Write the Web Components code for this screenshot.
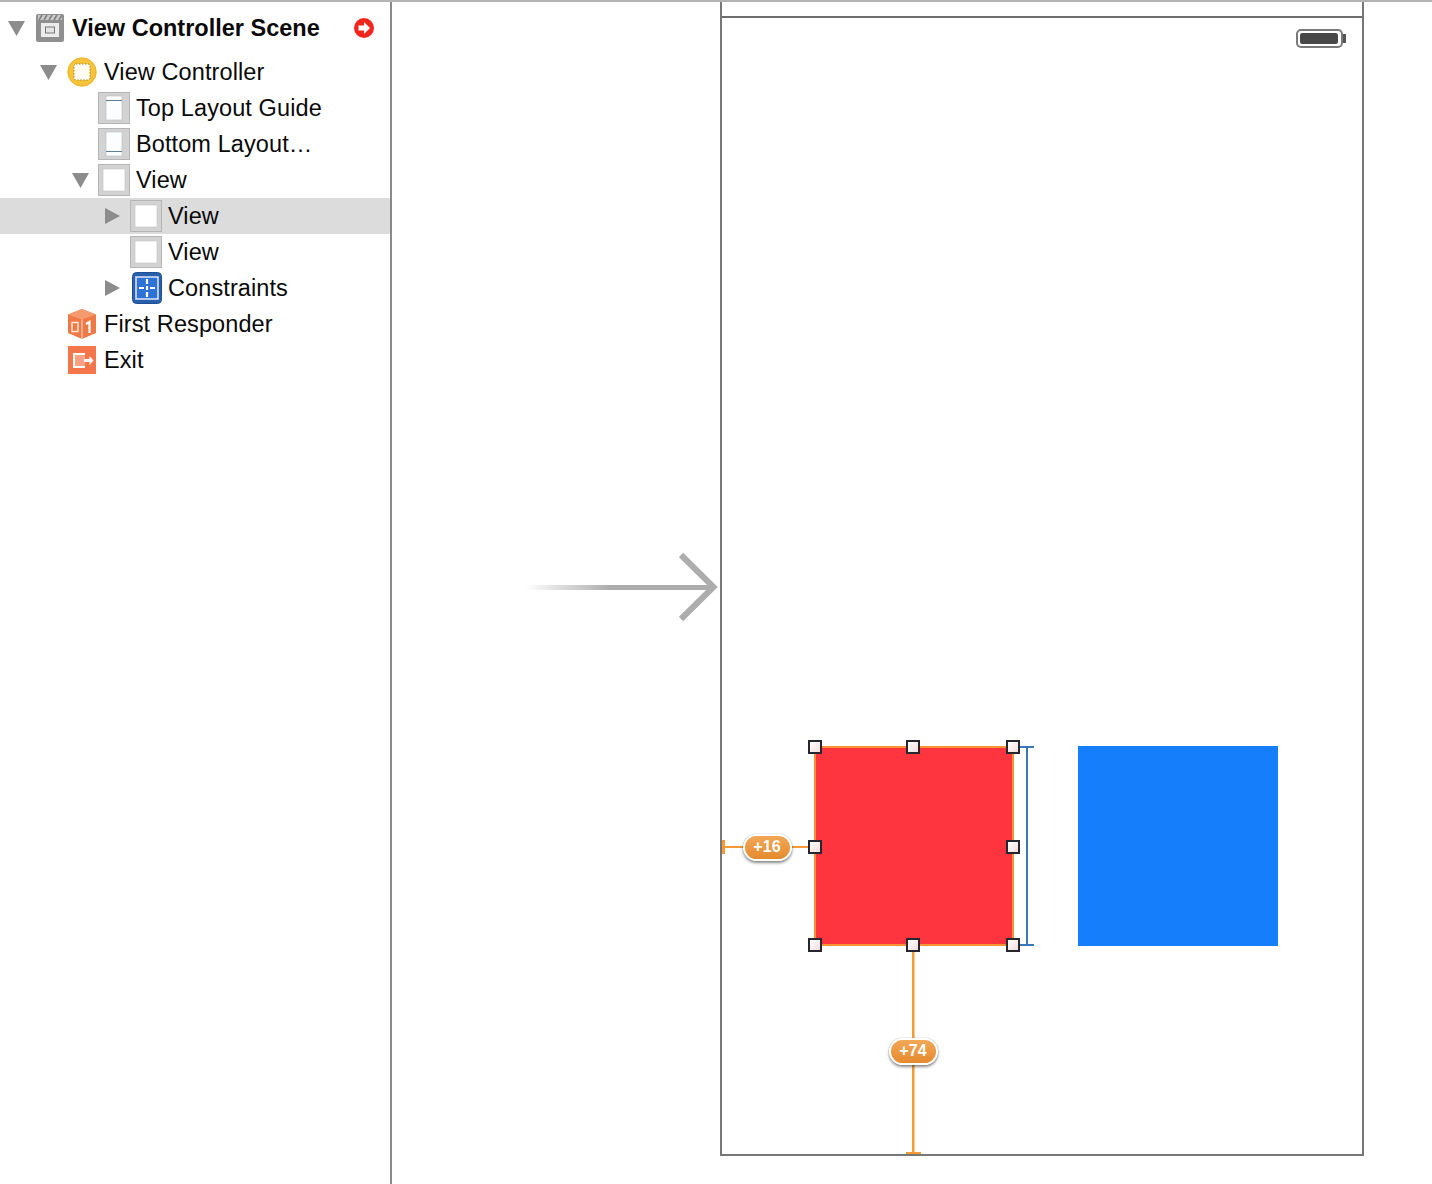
<!DOCTYPE html>
<html lang="en"><head><meta charset="utf-8"><title>Storyboard</title>
<style>html,body{margin:0;padding:0;background:#fff}body{width:1432px;height:1184px;overflow:hidden;font-family:"Liberation Sans",Arial,sans-serif}</style>
</head><body>
<ib-editor>
  <ib-outline slot="outline">
    <ib-row level="0" open icon="scene" bold badge>View Controller Scene</ib-row>
    <ib-row level="1" open icon="vc" top="8">View Controller</ib-row>
    <ib-row level="2" icon="topguide">Top Layout Guide</ib-row>
    <ib-row level="2" icon="bottomguide">Bottom Layout…</ib-row>
    <ib-row level="2" open icon="view">View</ib-row>
    <ib-row level="3" closed icon="view" selected>View</ib-row>
    <ib-row level="3" icon="view">View</ib-row>
    <ib-row level="3" closed icon="constraints">Constraints</ib-row>
    <ib-row level="1" icon="responder">First Responder</ib-row>
    <ib-row level="1" icon="exit">Exit</ib-row>
  </ib-outline>
  <ib-canvas slot="canvas"></ib-canvas>
</ib-editor>
<script>
function tpl(css, html){const t=document.createElement('template');t.innerHTML='<style>'+css+'</style>'+html;return t;}
function define(name,t){customElements.define(name,class extends HTMLElement{constructor(){super();this.attachShadow({mode:'open'}).appendChild(t.content.cloneNode(true));}});}

define('ib-editor',tpl(`:host{display:flex;width:1432px;height:1184px;box-sizing:border-box;border-top:2px solid #b3b3b3}
 ::slotted([slot=outline]){flex:0 0 390px}
 ::slotted([slot=canvas]){flex:1}`,`<slot name="outline"></slot><slot name="canvas"></slot>`));

define('ib-outline',tpl(`:host{display:flex;flex-direction:column;padding-top:8px;border-right:2px solid #8a8a8a;width:390px;background:#fff;color:#0a0a0a}`,`<slot></slot>`));

const frameBox=(line)=>`<svg width="32" height="32" viewBox="0 0 32 32"><rect x=".5" y=".5" width="31" height="31" fill="#d2d2d2" stroke="#b5b5b5"/><rect x="8" y="4" width="16" height="24" fill="#fbfdff" stroke="#bdbdbd" stroke-width=".6"/>${line}</svg>`;
const ICONS={
 scene:`<svg width="28" height="28" viewBox="0 0 28 28"><rect x="0" y="0" width="28" height="28" rx="2" fill="#8f8f8f"/><path d="M2 1h24v5H2z" fill="#c9c9c9"/><path d="M3 6l3-5M8 6l3-5M13 6l3-5M18 6l3-5M23 6l3-5" stroke="#7f7f7f" stroke-width="1.6"/><rect x="5" y="9" width="18" height="14" fill="#ececec"/><rect x="9.500" y="13" width="9" height="6" fill="#e4e4e4" stroke="#777" stroke-width="1"/></svg>`,
 vc:`<svg width="30" height="30" viewBox="0 0 30 30"><circle cx="15" cy="15" r="14.500" fill="#f6c33c"/><circle cx="15" cy="15" r="14" fill="none" stroke="#eeb52c"/><rect x="7" y="7" width="16" height="16" rx="2" fill="#fffdf0" stroke="#a8842a" stroke-width="1" stroke-dasharray="1.500 1.500"/></svg>`,
 topguide:frameBox(`<path d="M8 8.500h16" stroke="#5f7f96" stroke-width="1"/>`),
 bottomguide:frameBox(`<path d="M8 23.500h16" stroke="#5f7f96" stroke-width="1"/>`),
 view:`<svg width="32" height="32" viewBox="0 0 32 32"><rect x=".5" y=".5" width="31" height="31" fill="#d2d2d2" stroke="#b5b5b5"/><rect x="5" y="5" width="22" height="22" rx="1" fill="#fff" stroke="#c4c4c4" stroke-width=".6"/></svg>`,
 constraints:`<svg width="32" height="32" viewBox="-2 0 32 32"><rect x=".5" y=".5" width="29" height="31" rx="4" fill="#2a5fae" stroke="#1f4e97"/><rect x="4" y="5" width="22" height="22" fill="#2f72d6" stroke="#dfeafa" stroke-width="1.500"/><path d="M15 7v5M15 14v4M15 20v5M7 16h5M14 16h2M18 16h5" stroke="#fff" stroke-width="2.200"/></svg>`,
 responder:`<svg width="28" height="30" viewBox="0 0 28 30"><path d="M14 0L28 5.500V24L14 30L0 24V5.500Z" fill="#f07a47"/><path d="M0 5.500L14 10.500L28 5.500L14 0Z" fill="#f59a6e"/><path d="M14 10.500V30" stroke="#fbd0b8" stroke-width="1.200"/><rect x="4" y="13.500" width="6" height="9" fill="none" stroke="#fde6d8" stroke-width="1.500"/><path d="M18 15l3.500-2V24" fill="none" stroke="#fff" stroke-width="2.200"/></svg>`,
 exit:`<svg width="28" height="28" viewBox="0 0 28 28"><rect width="28" height="28" fill="#f5764a"/><path d="M17 8H6v13h11" fill="#f9a184" stroke="#fff" stroke-width="2"/><path d="M16 13h5.500v-3l4 4.500-4 4.500v-3H16Z" fill="#fff"/></svg>`
};

define('ib-icon',tpl(`:host{display:flex;width:32px;height:32px;align-items:center;justify-content:center}svg{display:block}`,``));

const rowT=tpl(`:host{display:flex;align-items:center;height:36px;flex:none;font-size:23.5px;line-height:36px;white-space:nowrap;position:relative;letter-spacing:.1px}
 :host([selected]){background:#dcdcdc}
 :host([bold]){font-weight:700;letter-spacing:0}
 .tri{flex:0 0 34px;display:flex;justify-content:flex-start;padding-left:8px;box-sizing:border-box}
 .ic{flex:0 0 32px;margin-right:6px}
 .name{flex:1}
 .go{position:absolute;left:354px;top:8px}
 svg{display:block}`,
 `<span class="tri"></span><ib-icon class="ic"></ib-icon><span class="name"><slot></slot></span>`);
class IbRow extends HTMLElement{
 constructor(){super();this.attachShadow({mode:'open'}).appendChild(rowT.content.cloneNode(true));}
 connectedCallback(){
  const l=+this.getAttribute('level')||0;this.style.paddingLeft=(32*l)+'px';this.style.width=(390-32*l)+'px';
  if(this.hasAttribute('top'))this.style.marginTop=this.getAttribute('top')+'px';
  const tri=this.shadowRoot.querySelector('.tri');
  if(this.hasAttribute('open'))tri.innerHTML='<svg width="17" height="15" viewBox="0 0 17 15"><path d="M0 0H17L8.500 15Z" fill="#8c8c8c"/></svg>';
  if(this.hasAttribute('closed')){tri.style.paddingLeft='9px';tri.innerHTML='<svg width="15" height="16" viewBox="0 0 15 16"><path d="M0 0L15 8L0 16Z" fill="#8c8c8c"/></svg>';}
  this.shadowRoot.querySelector('.ic').shadowRoot.innerHTML+=ICONS[this.getAttribute('icon')]||'';
  if(this.hasAttribute('badge')){const g=document.createElement('span');g.className='go';g.innerHTML='<svg width="20" height="20" viewBox="0 0 20 20"><circle cx="10" cy="10" r="10" fill="#f2261d"/><path d="M4.500 7.500H10V4l6 6-6 6v-3.500H4.500Z" fill="#fff"/></svg>';this.shadowRoot.appendChild(g);}
 }
}
customElements.define('ib-row',IbRow);

define('ib-handle',tpl(`:host{position:absolute;width:14px;height:14px;box-sizing:border-box;border:2px solid #26262e;background:linear-gradient(135deg,#fff,#f3dcdc);margin:-7px 0 0 -7px;z-index:3}`,``));
define('ib-badge',tpl(`:host{position:absolute;width:49px;height:27px;margin:-13px 0 0 -24px;box-sizing:border-box;border:2px solid #fff;border-radius:14px;background:linear-gradient(#f2a857,#e58a2e);color:#fff;font:700 16px/21px "Liberation Sans",Arial,sans-serif;text-align:center;box-shadow:0 2px 3px rgba(0,0,0,.45),0 0 1px rgba(0,0,0,.5);z-index:4;letter-spacing:.2px;text-indent:-1px}`,`<slot></slot>`));

define('ib-canvas',tpl(`:host{display:block;background:#fff;position:relative;padding-left:328px;min-width:0}
 .phone{width:644px;height:1154px;box-sizing:border-box;border:solid #777;border-width:0 2px 2px 2px;display:flex;flex-direction:column;position:relative}
 .nav{height:14px;flex:none}
 .screen{flex:1;border-top:2px solid #6e6e6e;position:relative}
 .arrow{position:absolute;left:133px;top:550px}
 .battery{position:absolute;left:574px;top:11px}
 .red{position:absolute;left:92px;top:728px;width:200px;height:200px;box-sizing:border-box;background:#fe353f;border:2px solid #f79432}
 .blue{position:absolute;left:356px;top:728px;width:200px;height:200px;background:#147efb}
 .over{position:absolute;left:0;top:0;overflow:visible;z-index:2}`,
 `<svg class="arrow" width="200" height="72" viewBox="0 0 200 72"><defs><linearGradient id="g" x1="0" x2="1" y1="0" y2="0"><stop offset="0" stop-color="#adadad" stop-opacity="0"/><stop offset=".45" stop-color="#adadad"/><stop offset="1" stop-color="#adadad"/></linearGradient></defs><rect x="0" y="33" width="189" height="5" fill="url(#g)"/><path d="M156 3L188.500 35L156 67" fill="none" stroke="#adadad" stroke-width="6"/></svg>
 <div class="phone"><div class="nav"></div><div class="screen">
  <svg class="battery" width="50" height="20" viewBox="0 0 50 20"><rect x="1" y="1" width="45" height="17" rx="4" fill="#fff" stroke="#7a7a7a" stroke-width="2"/><rect x="4" y="4" width="38" height="11" rx="2.500" fill="#484848"/><rect x="47" y="5" width="3" height="9" fill="#555"/></svg>
  <div class="red"></div><div class="blue"></div>
  <svg class="over" width="642" height="1136" viewBox="0 0 642 1136">
   <g fill="#f59a35">
    <rect x="0" y="828" width="86" height="2"/><rect x="0" y="822" width="3" height="14"/>
    <rect x="190" y="934" width="2.500" height="201"/><rect x="184" y="1134" width="15" height="2"/>
   </g>
   <g fill="#3a78b5"><rect x="304" y="729" width="2" height="198"/><rect x="297" y="728" width="15" height="2"/><rect x="297" y="926" width="15" height="2"/></g>
  </svg>
  <ib-handle style="left:93px;top:729px"></ib-handle><ib-handle style="left:191px;top:729px"></ib-handle><ib-handle style="left:291px;top:729px"></ib-handle>
  <ib-handle style="left:93px;top:829px"></ib-handle><ib-handle style="left:291px;top:829px"></ib-handle>
  <ib-handle style="left:93px;top:927px"></ib-handle><ib-handle style="left:191px;top:927px"></ib-handle><ib-handle style="left:291px;top:927px"></ib-handle>
  <ib-badge style="left:45px;top:829px">+16</ib-badge><ib-badge style="left:191px;top:1033px">+74</ib-badge>
 </div></div>`));
</script>
</body></html>
